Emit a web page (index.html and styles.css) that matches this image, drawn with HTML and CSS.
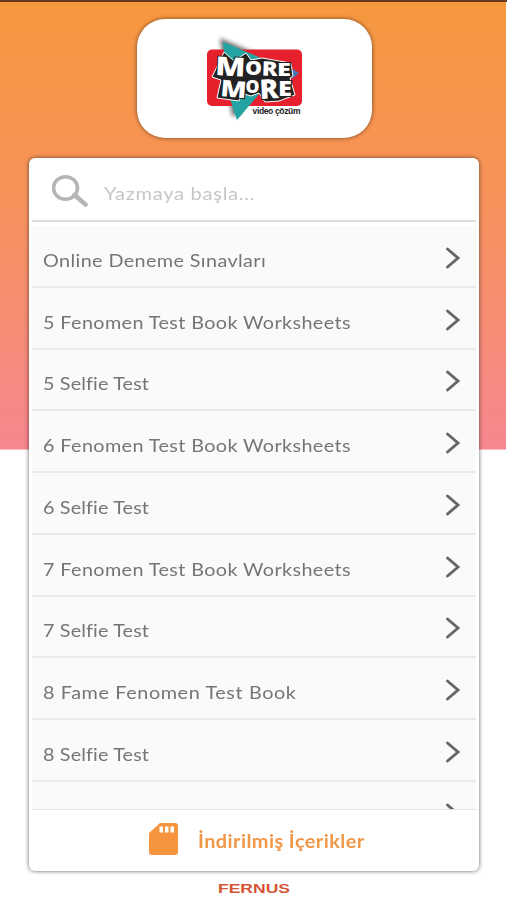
FILE: index.html
```html
<!DOCTYPE html>
<html lang="tr">
<head>
<meta charset="utf-8">
<title>More &amp; More Video Çözüm</title>
<link rel="stylesheet" href="styles.css">
</head>
<body>
<svg class="defs" aria-hidden="true">
  <symbol id="chevron" viewBox="0 0 16 24"><path d="M2.500 3 13 12 2.500 21" fill="none" stroke="#666" stroke-width="2.900" stroke-linecap="round" stroke-linejoin="miter"/></symbol>
</svg>
<div class="app">
  <header class="brand">
    <svg class="logo" viewBox="0 0 130 110" role="img">
      <defs><filter id="soft" x="-30%" y="-30%" width="160%" height="160%"><feGaussianBlur stdDeviation="2"/></filter></defs>
      <path d="M30 13 74 32 49 90 42 91z" fill="#222" opacity=".65" filter="url(#soft)"/>
      <rect x="17" y="24.500" width="95" height="56.500" rx="5" fill="#e6202d"/>
      <path d="M33 17 76 35 70 68 47 95 38 68z" fill="#24a3a3"/>
      <path d="m101 43 8 5-7 6z" fill="#4778b8"/>
      <path d="M22 52 34 27 44 36 56 28 61 35 72 33 101 38 103 51 100 53 105 70 89 76 75 77 69 68 61 71 51 68 49 76 27 73 31 55z" fill="#222" stroke="#fff" stroke-width="1" stroke-linejoin="round"/>
      <g class="logo-word">
        <g transform="translate(25 50) rotate(3)"><text font-size="26" textLength="30" lengthAdjust="spacingAndGlyphs">M</text></g>
        <text x="55" y="50" font-size="20" textLength="17" lengthAdjust="spacingAndGlyphs">O</text>
        <g transform="translate(71.500 50.500) rotate(2)"><text font-size="20" textLength="16" lengthAdjust="spacingAndGlyphs">R</text></g>
        <text x="87" y="51" font-size="18" textLength="14" lengthAdjust="spacingAndGlyphs">E</text>
        <g transform="translate(30 71) rotate(5)"><text font-size="23" textLength="26" lengthAdjust="spacingAndGlyphs">M</text></g>
        <text x="55.500" y="67.500" font-size="18" textLength="14" lengthAdjust="spacingAndGlyphs">O</text>
        <g transform="translate(70 74) rotate(-3)"><text font-size="27" textLength="19" lengthAdjust="spacingAndGlyphs">R</text></g>
        <text x="88" y="71" font-size="21" textLength="14" lengthAdjust="spacingAndGlyphs">E</text>
      </g>
      <text class="logo-sub" x="62.500" y="89" font-size="8.500" textLength="48" lengthAdjust="spacing">video çözüm</text>
    </svg>
  </header>
  <main class="card">
    <div class="search">
      <svg class="search-icon" viewBox="0 0 36 34"><ellipse cx="13.500" cy="14" rx="12" ry="11.300" fill="none" stroke="#b5b5b5" stroke-width="3.600"/><path d="m22.500 21 11 9.500" fill="none" stroke="#b5b5b5" stroke-width="4.600" stroke-linecap="round"/></svg>
      <span class="placeholder">Yazmaya başla...</span>
    </div>
    <ul class="list">
      <li class="row"><span>Online Deneme Sınavları</span><svg class="chev"><use href="#chevron"/></svg></li>
      <li class="row"><span>5 Fenomen Test Book Worksheets</span><svg class="chev"><use href="#chevron"/></svg></li>
      <li class="row short"><span>5 Selfie Test</span><svg class="chev"><use href="#chevron"/></svg></li>
      <li class="row"><span>6 Fenomen Test Book Worksheets</span><svg class="chev"><use href="#chevron"/></svg></li>
      <li class="row short"><span>6 Selfie Test</span><svg class="chev"><use href="#chevron"/></svg></li>
      <li class="row"><span>7 Fenomen Test Book Worksheets</span><svg class="chev"><use href="#chevron"/></svg></li>
      <li class="row short"><span>7 Selfie Test</span><svg class="chev"><use href="#chevron"/></svg></li>
      <li class="row wide"><span>8 Fame Fenomen Test Book</span><svg class="chev"><use href="#chevron"/></svg></li>
      <li class="row short"><span>8 Selfie Test</span><svg class="chev"><use href="#chevron"/></svg></li>
      <li class="row"><span></span><svg class="chev"><use href="#chevron"/></svg></li>
    </ul>
    <div class="downloads">
      <svg class="sd" viewBox="0 0 29 32"><path d="M11 0H26a3 3 0 0 1 3 3V29a3 3 0 0 1-3 3H3a3 3 0 0 1-3-3V10z" fill="#f6953e"/><path d="M10.500 3.500h3.500v6h-3.500zm5.500 0h3.500v6h-3.500zm5.500 0h3.500v6h-3.500z" fill="#fff"/></svg>
      <span>İndirilmiş İçerikler</span>
    </div>
  </main>
  <footer class="maker"><svg width="72" height="12" viewBox="0 0 72 12"><text x="0" y="9.500" textLength="72" lengthAdjust="spacingAndGlyphs">FERNUS</text></svg></footer>
</div>
</body>
</html>
```
FILE: styles.css
```css
* { box-sizing: border-box; }
body { margin: 0; background: #fff; font-family: Lato, sans-serif; }
.defs { position: absolute; width: 0; height: 0; }
.app {
  height: 900px;
  padding-top: 16.5px;
  border-top: 2px solid #68391f;
  background: linear-gradient(#f7983e 0, #f7925b 200px, #f7868f 448px) 0 0 / 506px 447.500px no-repeat;
  overflow: hidden;
}
.brand {
  width: 235px;
  height: 119.500px;
  margin: 0 0 0 136.500px;
  border-radius: 28px;
  background: #fff;
  box-shadow: 0 0 4px rgba(70, 40, 20, .75);
  padding: 6.500px 0 0 53.500px;
}
.logo { display: block; width: 130px; height: 110px; }
.logo-word { font-family: "Open Sans", sans-serif; font-weight: 800; fill: #fff; stroke: #222; stroke-width: 2px; paint-order: stroke; }
.logo-sub { font-family: "Liberation Sans Narrow", "Liberation Sans", sans-serif; font-weight: 700; fill: #222; }
.card {
  width: 449.500px;
  height: 713px;
  margin: 20px 0 0 29px;
  padding: 0 2.500px;
  border-radius: 6px;
  background: #fff;
  box-shadow: 0 0 4px rgba(50, 40, 40, .75);
}
.search {
  height: 64px;
  display: flex;
  align-items: center;
  padding: 2px 0 0 20px;
  border-bottom: 2px solid #dcdcdc;
}
.search-icon { width: 36px; height: 34px; margin: 2px 16px 0 0; }
.placeholder { color: #c6c6c6; font-size: 18px; letter-spacing: .6px; margin-top: 6px; transform: scaleX(1.12); transform-origin: 0 50%; }
.list { list-style: none; height: 583px; margin: 4px 0 0; padding: 0; background: #fafafa; overflow: hidden; }
.row {
  height: 61.750px;
  display: flex;
  justify-content: space-between;
  align-items: center;
  padding: 8px 15.500px 0 11.500px;
  border-bottom: 2px solid #eaeaea;
  color: #757575;
  font-size: 18px;
  letter-spacing: .35px;
  white-space: nowrap;
}
.row span { transform: scaleX(1.1); transform-origin: 0 50%; }
.short { letter-spacing: .12px; }
.wide { letter-spacing: .55px; }
.chev { width: 16px; height: 24px; margin-top: -4px; }
.downloads {
  height: 62px;
  border-top: 1.500px solid #e4e4e4;
  display: flex;
  align-items: center;
  padding-left: 117.500px;
  gap: 20px;
  color: #ef9847;
  font-size: 18px;
  font-weight: 700;
  letter-spacing: .4px;
}
.downloads span { padding-top: 1px; transform: scaleX(1.105); transform-origin: 0 50%; }
.sd { width: 29px; height: 32px; margin-top: -3px; }
.maker { height: 12px; margin: 12px 0 0 218px; line-height: 0; }
.maker text { font: 700 12px "Liberation Sans", sans-serif; fill: #d55435; }
```
